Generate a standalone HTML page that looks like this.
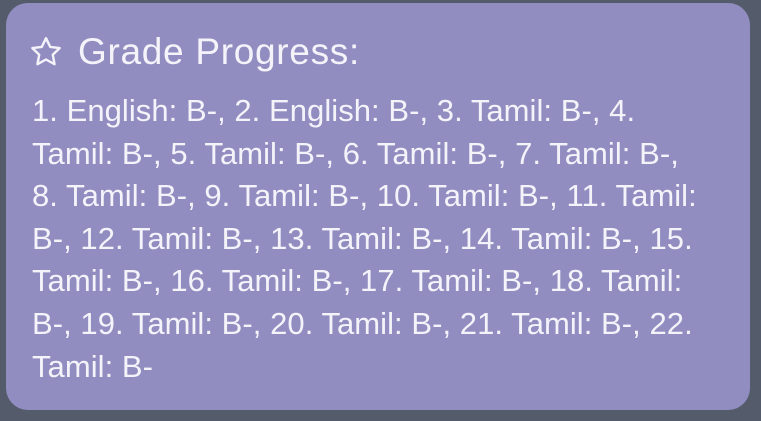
<!DOCTYPE html>
<html><head><style>
html,body{margin:0;padding:0;width:761px;height:421px;background:#545c6c;overflow:hidden}
.card{position:absolute;left:6px;top:3px;width:744px;height:407px;background:#918dc0;border-radius:22px}
.t{position:absolute;left:78px;top:30px;color:#f4f3fa;font-family:"Liberation Sans",sans-serif;font-size:37px;line-height:44px;white-space:nowrap;letter-spacing:0.7px}
.star{position:absolute;left:28px;top:34px}
.b{position:absolute;left:32px;top:90px;color:#f4f3fa;font-family:"Liberation Sans",sans-serif;font-size:31px;line-height:42.6px;white-space:nowrap;letter-spacing:0.05px}
</style></head><body>
<div class="card"></div>
<svg class="star" width="36" height="36" viewBox="0 0 24 24"><path d="M12 2.8l2.8 5.8 6.3.8-4.6 4.4 1.2 6.3L12 17l-5.7 3.1 1.2-6.3L2.9 9.4l6.3-.8z" fill="none" stroke="#f4f3fa" stroke-width="1.6" stroke-linejoin="round"/></svg>
<div class="t">Grade Progress:</div>
<div class="b">1. English: B-, 2. English: B-, 3. Tamil: B-, 4.<br>Tamil: B-, 5. Tamil: B-, 6. Tamil: B-, 7. Tamil: B-,<br>8. Tamil: B-, 9. Tamil: B-, 10. Tamil: B-, 11. Tamil:<br>B-, 12. Tamil: B-, 13. Tamil: B-, 14. Tamil: B-, 15.<br>Tamil: B-, 16. Tamil: B-, 17. Tamil: B-, 18. Tamil:<br>B-, 19. Tamil: B-, 20. Tamil: B-, 21. Tamil: B-, 22.<br>Tamil: B-</div>
</body></html>
